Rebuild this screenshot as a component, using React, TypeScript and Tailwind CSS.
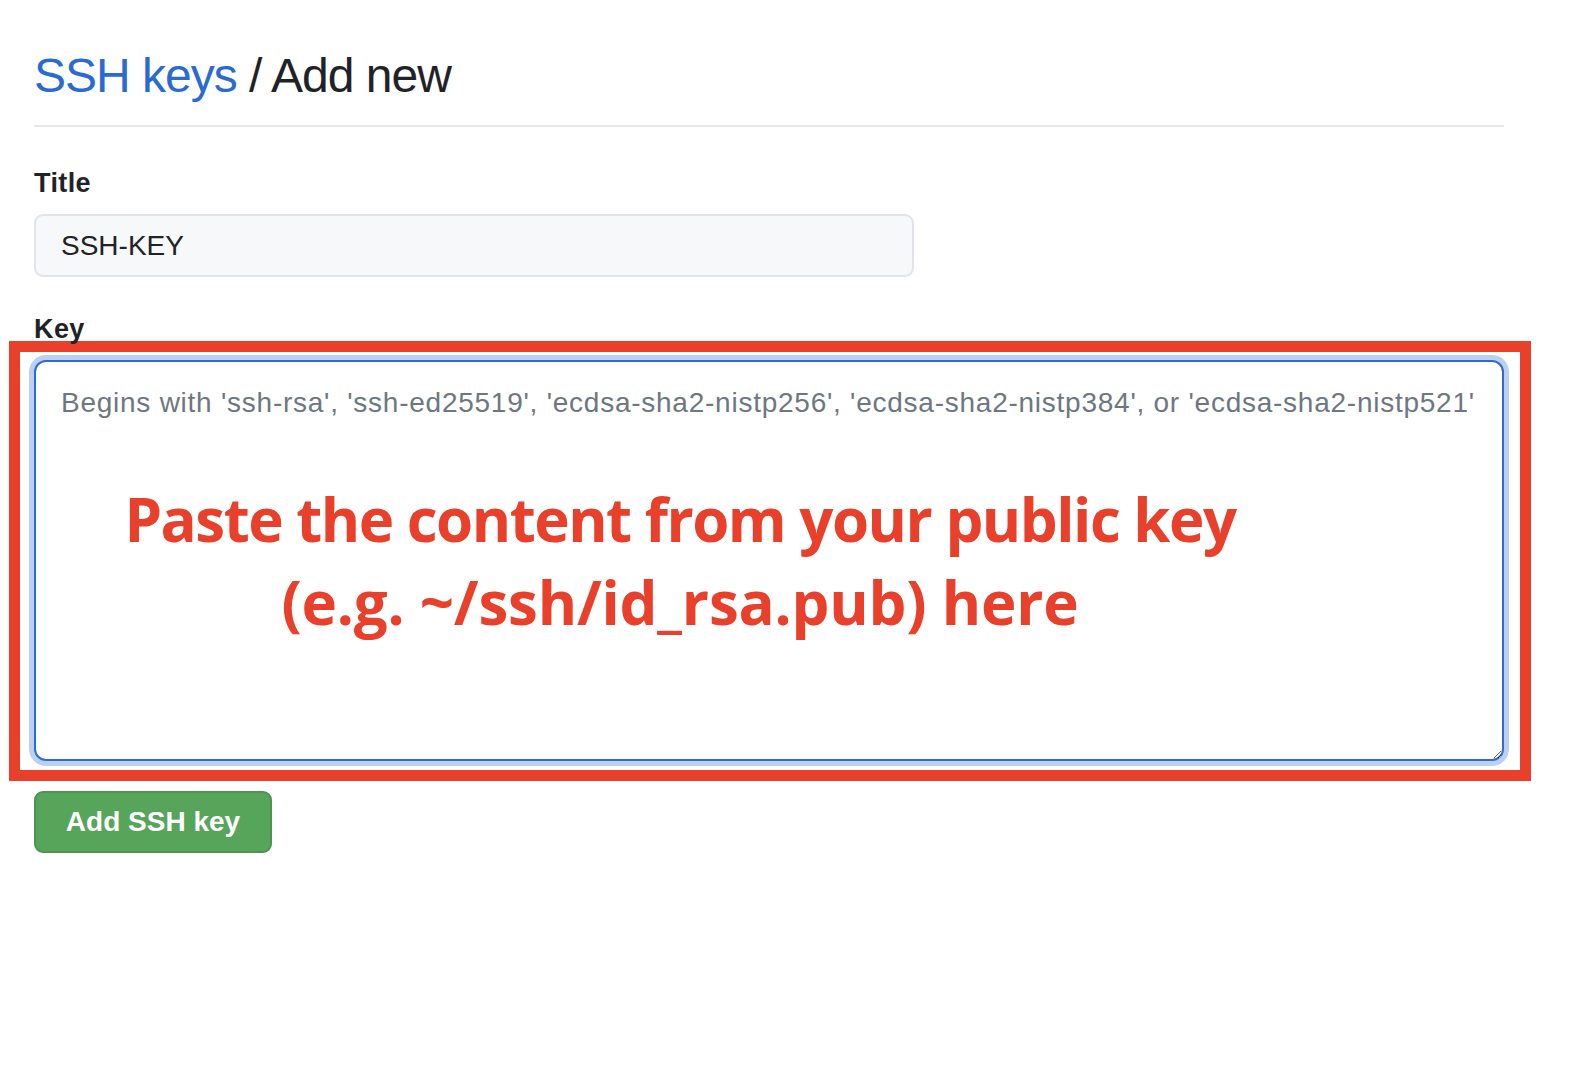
export default function App() {
  return (
    <div className="min-h-[1090px] w-full bg-white font-['Liberation_Sans',Arial,sans-serif] text-[#1f2328]">
      <div className="w-[1470px] ml-[34px]">
        {/* Header */}
        <div className="pt-[46px] pb-[19px] border-b-2 border-[#e8e8e8]">
          <h1 className="text-[48px] leading-[60px] tracking-[-1px] font-normal">
            <a className="text-[#2b6bd0]">SSH keys</a> / Add new
          </h1>
        </div>

        {/* Title field */}
        <div className="mt-[40px]">
          <label className="block text-[27px] leading-[32px] tracking-[0.4px] font-bold">Title</label>
          <input
            defaultValue="SSH-KEY"
            className="mt-[15px] w-[880px] h-[63px] px-[25px] rounded-[9px] border-2 border-[#e1e4e8] bg-[#f6f8fa] text-[28px] text-[#1f2328] outline-none"
          />
        </div>

        {/* Key field */}
        <div className="mt-[38px]">
          <label className="block text-[27px] leading-[28px] tracking-[0.4px] font-bold">Key</label>
          <div className="-mt-[2px] -ml-[25px] -mr-[27px] border-[11px] border-[#e8402a] pl-[14px] pt-[8px] pr-[16px] pb-[9px]">
            <div className="relative">
              <textarea
                placeholder="Begins with 'ssh-rsa', 'ssh-ed25519', 'ecdsa-sha2-nistp256', 'ecdsa-sha2-nistp384', or 'ecdsa-sha2-nistp521'"
                className="block w-[1470px] h-[401px] rounded-[12px] border-2 border-[#2f6bd0] bg-white pl-[25px] pr-[10px] pt-[20px] text-[28px] leading-[1.5] tracking-[0.75px] text-[#1f2328] placeholder:text-[#6e7781] outline-none shadow-[0_0_0_5px_#bcd1f1]"
              />
              {/* annotation over the textarea */}
              <div className="pointer-events-none absolute left-0 top-[118px] w-[1292px] text-center font-['Open_Sans',sans-serif] font-bold text-[60px] leading-[83px] text-[#e8402a]">
                <div className="tracking-[-1.5px]">Paste the content from your public key</div>
                <div className="tracking-[-0.2px]">(e.g. ~/ssh/id_rsa.pub) here</div>
              </div>
            </div>
          </div>
        </div>

        {/* Submit */}
        <button className="mt-[10px] w-[238px] h-[62px] rounded-[9px] border-2 border-[#4d9450] bg-[#57a55a] text-white text-[28px] font-bold">
          Add SSH key
        </button>
      </div>
    </div>
  )
}
